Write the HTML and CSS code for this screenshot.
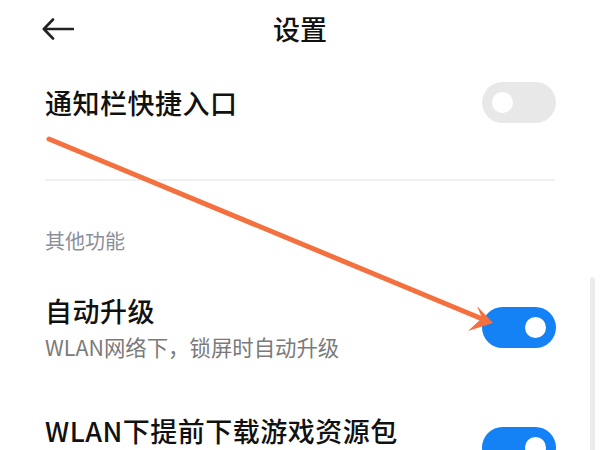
FILE: index.html
```html
<!DOCTYPE html>
<html lang="zh-CN">
<head>
<meta charset="utf-8">
<link rel="stylesheet" href="styles.css">
</head>
<body>
<div class="page">
  <header class="topbar">
    <svg class="back" width="32" height="22" viewBox="0 0 32 22"><path d="M31 11H2M11 1.5L1.8 11L11 20.5" fill="none" stroke="#222" stroke-width="2.6" stroke-linecap="round" stroke-linejoin="round"/></svg>
    <h1 class="title">设置</h1>
    <span class="spacer"></span>
  </header>

  <section class="row row-first">
    <div class="text"><div class="label">通知栏快捷入口</div></div>
    <span class="switch off"><span class="knob"></span></span>
  </section>

  <div class="divider"></div>

  <div class="section-label">其他功能</div>

  <section class="row row-two">
    <div class="text">
      <div class="label">自动升级</div>
      <div class="sub">WLAN网络下，锁屏时自动升级</div>
    </div>
    <span class="switch on"><span class="knob"></span></span>
  </section>

  <section class="row row-three">
    <div class="text"><div class="label">WLAN下提前下载游戏资源包</div></div>
    <span class="switch on"><span class="knob"></span></span>
  </section>

  <div class="scrollbar"></div>

  <svg class="annot" width="600" height="450" viewBox="0 0 600 450">
    <line x1="49" y1="139" x2="480" y2="318" stroke="#f4703f" stroke-width="5" stroke-linecap="round"/>
    <path d="M493 323L477 306L482 318L468 331Z" fill="#f4703f"/>
  </svg>
</div>
</body>
</html>
```

FILE: styles.css
```css
html, body {
  margin: 0;
  padding: 0;
  background: #fff;
}
body {
  font-family: "Noto Sans CJK SC", "Noto Sans", sans-serif;
  color: #111;
}
.page {
  position: relative;
  width: 600px;
  height: 450px;
  overflow: hidden;
}
.topbar {
  height: 57px;
  display: grid;
  grid-template-columns: 1fr auto 1fr;
  align-items: center;
  padding: 0 42px;
}
.back {
  display: block;
  margin-top: 1px;
}
.title {
  margin: 0;
  font-size: 27px;
  font-weight: 500;
  line-height: 1;
  color: #111;
}
.row {
  display: flex;
  align-items: center;
  justify-content: space-between;
  padding: 0 44px 0 45px;
}
.row-first {
  height: 91px;
}
.label {
  font-size: 27px;
  line-height: 36px;
  font-weight: 500;
  letter-spacing: 0.5px;
  color: #111;
}
.sub {
  font-size: 21.4px;
  line-height: 28px;
  color: #7a7a7a;
  margin-top: 4px;
}
.divider {
  height: 2px;
  background: #f0f0f0;
  margin: 31px 45px 0 45px;
}
.section-label {
  padding: 0 45px;
  margin-top: 46px;
  font-size: 20px;
  line-height: 28px;
  color: #8c8e9a;
}
.row-two {
  margin-top: 38px;
}
.row-three {
  margin-top: 52px;
  align-items: flex-start;
}
.row-three .switch {
  margin-top: 14px;
}
.switch {
  position: relative;
  display: block;
  width: 74px;
  height: 41px;
  border-radius: 21px;
  flex: none;
}
.switch.off {
  background: #e8e8e8;
}
.switch.on {
  background: #1482f5;
}
.knob {
  position: absolute;
  top: 10px;
  width: 21px;
  height: 21px;
  border-radius: 50%;
  background: #fff;
}
.off .knob {
  left: 10px;
}
.on .knob {
  right: 10px;
}
.scrollbar {
  position: absolute;
  left: 590px;
  top: 277px;
  width: 5px;
  height: 180px;
  border-radius: 3px;
  background: #ececec;
}
.annot {
  position: absolute;
  left: 0;
  top: 0;
  pointer-events: none;
}
```
